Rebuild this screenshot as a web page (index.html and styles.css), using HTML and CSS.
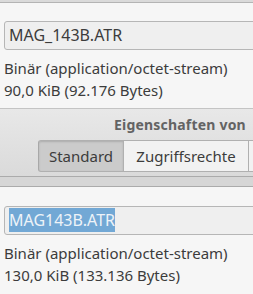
FILE: index.html
```html
<!DOCTYPE html>
<html>
<head>
    <title>Eigenschaften</title>
    <link rel="stylesheet" href="styles.css">
</head>
<body>
    <div class="window">
        <div class="edge"></div>

        <div class="panel">
            <div class="name-field">MAG_143B.ATR</div>
            <div class="info">Binär (application/octet-stream)</div>
            <div class="info">90,0 KiB (92.176 Bytes)</div>
        </div>

        <div class="header">
            <div class="title">Eigenschaften von</div>
            <div class="tabs">
                <div class="tab active">Standard</div>
                <div class="tab">Zugriffsrechte</div>
                <div class="tab more"></div>
            </div>
        </div>
        <div class="strip"></div>

        <div class="panel lower">
            <div class="name-field"><span class="selected">MAG143B.ATR</span></div>
            <div class="info">Binär (application/octet-stream)</div>
            <div class="info">130,0 KiB (133.136 Bytes)</div>
        </div>
    </div>
</body>
</html>
```

FILE: styles.css
```css
body {
    margin: 0;
    font-family: "Noto Sans", "DejaVu Sans", sans-serif;
    font-size: 15px;
    color: #3c3c3c;
    background: #f6f6f6;
}
.window {
    width: 253px;
    height: 294px;
    overflow: hidden;
}
.edge {
    height: 2px;
    background: #dadada;
    border-bottom: 1px solid #b4b4b4;
}
.panel {
    background: #f6f6f6;
    padding: 18px 0 7px 4px;
}
.panel.lower {
    padding-top: 19px;
}
.name-field {
    width: 270px;
    height: 27px;
    line-height: 27px;
    padding-left: 4px;
    border: 1px solid #b6b6b6;
    border-radius: 3px;
    background: #efefef;
    font-size: 16px;
    margin-bottom: 7px;
    white-space: nowrap;
}
.selected {
    background: #72a8d5;
    color: #eef3f8;
    padding: 1px 0;
}
.info {
    height: 22px;
    line-height: 22px;
    white-space: nowrap;
}
.header {
    border-top: 1px solid #c4c4c4;
    background: linear-gradient(#e8e8e8, #dadada);
    padding: 5px 0 4px 38px;
    border-bottom: 1px solid #ababab;
}
.title {
    padding-left: 76px;
    font-weight: bold;
    font-size: 14px;
    letter-spacing: 0.2px;
    color: #636363;
    white-space: nowrap;
    height: 22px;
    line-height: 22px;
    margin-bottom: 4px;
}
.tabs {
    display: flex;
    white-space: nowrap;
}
.tab {
    height: 30px;
    line-height: 30px;
    width: 124px;
    text-align: center;
    flex-shrink: 0;
    background: #f2f2f2;
    border: 1px solid #b0b0b0;
    border-left: none;
}
.tab.active {
    width: 84px;
    background: #cbcbcb;
    border-left: 1px solid #a8a8a8;
    border-radius: 3px 0 0 3px;
    box-shadow: inset 0 1px 2px rgba(0,0,0,0.15);
}
.tab.more {
    width: 40px;
}
.strip {
    height: 9px;
    background: #d6d6d6;
    border-bottom: 1px solid #ababab;
}
```
